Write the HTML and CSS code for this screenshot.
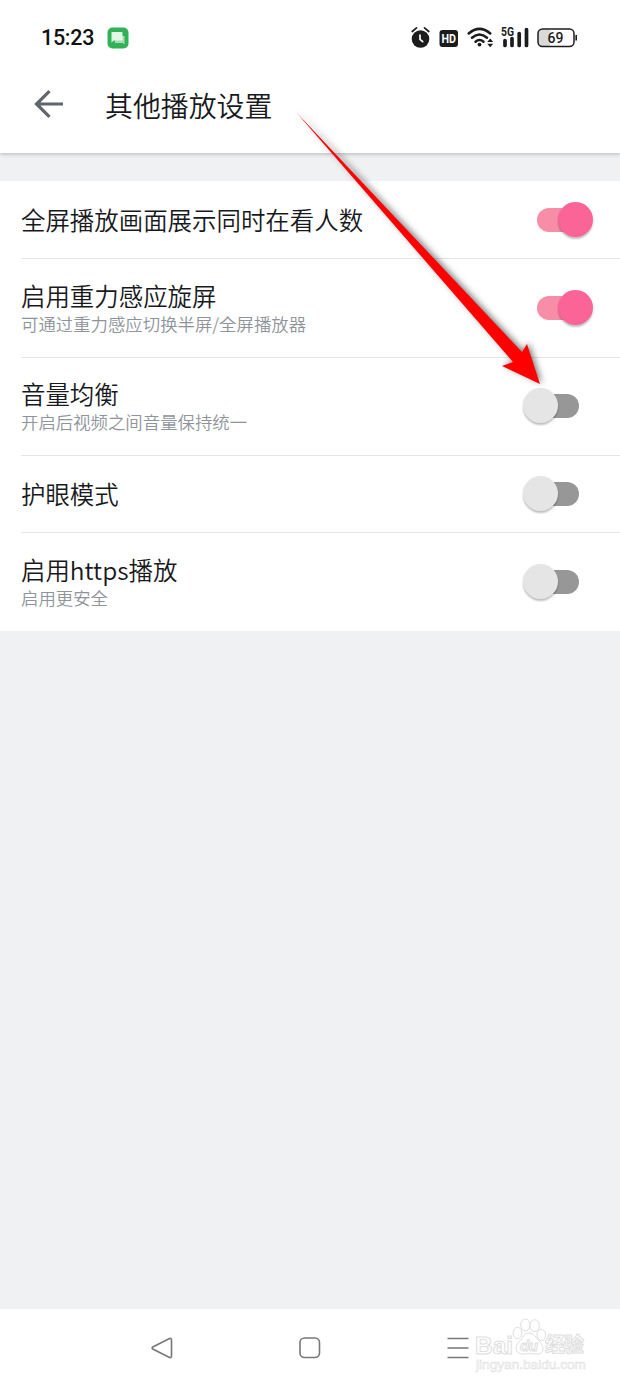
FILE: index.html
```html
<!DOCTYPE html>
<html lang="zh-CN">
	<head>
		<meta charset="UTF-8">
		<title>其他播放设置</title>
		<link rel="stylesheet" href="styles.css">
	</head>
	<body>
		<div id="phone">
			<div class="top">
				<div class="status">
					<span class="time">15:23</span>
					<svg class="msg" width="22" height="22" viewBox="0 0 22 22">
						<rect x="0.5" y="0.5" width="21" height="21" rx="5" fill="#31b257"/>
						<path d="M8 9h9.500v8.500l-2-1.500H8z" fill="#a3dfb3"/>
						<path d="M5 5h9.500q1 0 1 1v6.500q0 1-1 1H7l-2.500 2V6q0-1 .500-1z" fill="#e4f8e8"/>
					</svg>
					<div class="signs">
						<svg width="170" height="26" viewBox="0 0 170 26">
							<!-- 闹钟 -->
							<circle cx="10.500" cy="14" r="8.800" fill="#1c1c1c"/>
							<path d="M2.200 6.500l4.300-3.700M18.800 6.500l-4.300-3.700" stroke="#1c1c1c" stroke-width="1.700" stroke-linecap="round"/>
							<path d="M10 10v4.300l2.700 2.300" fill="none" stroke="#fff" stroke-width="1.700" stroke-linecap="round"/>
							<!-- HD -->
							<rect x="29.500" y="5" width="18.500" height="17" rx="3" fill="#1c1c1c"/>
							<text x="31.500" y="18" class="hd" textLength="14.500" lengthAdjust="spacingAndGlyphs">HD</text>
							<!-- wifi -->
							<g fill="none" stroke="#1c1c1c" stroke-width="2.500" stroke-linecap="round">
								<path d="M58.700 8.500Q69.500-.700 80.300 8.500"/>
								<path d="M62 12.800Q69.500 6.300 77 12.800"/>
								<path d="M65.500 16.700Q69.500 13.300 73.500 16.700"/>
							</g>
							<circle cx="69.500" cy="19.600" r="1.900" fill="#1c1c1c"/>
							<path d="M77.200 17l3-3.500 3 3.500zM77.200 18.800l3 3.500 3-3.500z" fill="#1c1c1c"/>
							<!-- 5G -->
							<text x="91" y="10.800" class="net" textLength="13" lengthAdjust="spacingAndGlyphs">5G</text>
							<path d="M95 15.500v5M102 13.500v7M109.200 8.500v12M116.500 4.500v16" stroke="#1c1c1c" stroke-width="3.700" stroke-linecap="round"/>
							<!-- 电池 -->
							<path d="M132 4.500h8v17h-8q-4 0-4-4v-9q0-4 4-4z" fill="#d9d9d9"/>
							<rect x="128" y="4" width="36" height="17.500" rx="4.500" fill="none" stroke="#1c1c1c" stroke-width="1.500"/>
							<path d="M166.200 10v5.500" stroke="#1c1c1c" stroke-width="1.600"/>
							<text x="145.500" y="17.600" class="power">69</text>
						</svg>
					</div>
				</div>
				<div class="title">
					<svg width="30" height="30" viewBox="0 0 30 30">
						<path d="M29 15H2.500M15.500 2.200L2.500 15l13 12.800" fill="none" stroke="#61666d" stroke-width="3.200"/>
					</svg>
					<h1>其他播放设置</h1>
				</div>
			</div>
			<ul class="list">
				<li>
					<div class="text"><p>全屏播放画面展示同时在看人数</p></div>
					<div class="switch on"><span></span></div>
				</li>
				<li class="two first">
					<div class="text"><p>启用重力感应旋屏</p><small>可通过重力感应切换半屏/全屏播放器</small></div>
					<div class="switch on"><span></span></div>
				</li>
				<li class="two">
					<div class="text"><p>音量均衡</p><small>开启后视频之间音量保持统一</small></div>
					<div class="switch"><span></span></div>
				</li>
				<li class="short">
					<div class="text"><p>护眼模式</p></div>
					<div class="switch"><span></span></div>
				</li>
				<li class="two">
					<div class="text"><p>启用https播放</p><small>启用更安全</small></div>
					<div class="switch"><span></span></div>
				</li>
			</ul>
			<div class="nav">
				<svg width="22" height="22" viewBox="0 0 22 22">
					<path d="M1.800 10Q.400 11 1.800 12L18.500 20.500Q20.500 21 20.500 19V3Q20.500 1 18.500 1.500Z"/>
				</svg>
				<svg width="22" height="22" viewBox="0 0 22 22">
					<rect x="1" y="1" width="19.500" height="19.500" rx="4.500"/>
				</svg>
				<svg width="22" height="22" viewBox="0 0 22 22">
					<path d="M.500 1.500h21M.500 11h21M.500 20.500h21"/>
				</svg>
			</div>
			<svg class="mark" width="116" height="62" viewBox="0 0 116 62">
				<g>
					<ellipse cx="42.500" cy="20" rx="4.300" ry="5.700"/>
					<ellipse cx="50.300" cy="12" rx="4.700" ry="6"/>
					<ellipse cx="59.700" cy="12.700" rx="4.700" ry="6"/>
					<ellipse cx="66.300" cy="22" rx="4.300" ry="5.700"/>
					<path d="M54 20c5 0 7 5 11 9s5 12-3 12c-4 0-8-1-12 0-10 1-11-7-6-12 4-4 5-9 10-9z"/>
				</g>
				<text x="0" y="40.500" class="bai" textLength="38" lengthAdjust="spacingAndGlyphs">Bai</text>
				<text x="45" y="38" class="du" textLength="18">du</text>
				<text x="70" y="39" class="exp" textLength="39">经验</text>
				<text x="1" y="56" class="site" textLength="110" lengthAdjust="spacingAndGlyphs">jingyan.baidu.com</text>
			</svg>
			<svg class="arrow" width="260" height="290" viewBox="0 0 260 290">
				<path d="M6 2L232 242L237 234L250 274L212 256L223 252Z" fill="#f00"/>
			</svg>
		</div>
	</body>
</html>
```
FILE: styles.css
```css
*{
	margin:0px;
	padding:0px;
	box-sizing:border-box;
}
body{
	background:#f0f1f3;
	font-family:"Noto Sans CJK SC",sans-serif;
}
#phone{
	width:620px;
	height:1386px;
	position:relative;
	display:flex;
	flex-direction:column;
	overflow:hidden;
}
.top{
	height:153px;
	background:#fff;
	box-shadow:0 1px 4px rgba(0,0,0,0.25);
}
.status{
	height:75px;
	display:flex;
	align-items:center;
	padding:0 40px 0 41px;
}
.time{
	font:500 21.5px/26px Roboto,sans-serif;
	letter-spacing:-0.3px;
	width:66px;
	padding-top:1px;
	color:#111;
}
.signs{
	margin-left:auto;
	height:26px;
}
.hd{
	font:bold 13px Roboto,sans-serif;
	fill:#fff;
}
.net{
	font:bold 13px Roboto,sans-serif;
	fill:#1c1c1c;
}
.power{
	font:500 14px Roboto,sans-serif;
	fill:#1c1c1c;
	text-anchor:middle;
}
.title{
	height:58px;
	display:flex;
	align-items:center;
	padding-left:34px;
}
h1{
	font-size:27.9px;
	font-weight:350;
	line-height:40px;
	margin-left:41px;
	padding-top:2px;
	color:#18191c;
}
.list{
	list-style:none;
	margin-top:28px;
	background:#fff;
}
li{
	height:78px;
	margin-left:21px;
	padding-right:27px;
	border-bottom:1px solid #e3e5e7;
	display:flex;
	align-items:center;
	justify-content:space-between;
}
.two{
	height:98px;
	padding-bottom:1px;
}
.first{height:99px;}
.short{height:77px;}
li:last-child{
	border-bottom:none;
}
.text p{
	font-size:24.45px;
	font-weight:350;
	line-height:32px;
	color:#18191c;
}
.text small{
	display:block;
	font-size:17.4px;
	font-weight:350;
	line-height:24px;
	color:#8f949b;
}
.switch{
	width:70px;
	height:36px;
	padding:6px 14px;
	position:relative;
}
.switch:before{
	content:"";
	display:block;
	height:24px;
	border-radius:12px;
	background:#979797;
}
.switch span{
	position:absolute;
	left:0;
	top:0;
	width:35px;
	height:35px;
	border-radius:50%;
	background:#e5e5e5;
	box-shadow:0 2px 2px rgba(0,0,0,0.25);
}
.on:before{
	background:#f78da7;
}
.on span{
	left:35px;
	background:#fb6497;
}
.nav{
	height:77px;
	margin-top:auto;
	background:#fff;
	display:flex;
	align-items:center;
	justify-content:center;
	gap:126px;
}
.nav svg{
	fill:none;
	stroke:#777;
	stroke-width:1.6;
}
.mark{
	position:absolute;
	left:475px;
	top:1313px;
	fill:#fff;
	stroke:#dedede;
}
.bai{
	font:bold 24px "Liberation Sans",sans-serif;
}
.du{
	font:bold italic 15px "Liberation Sans",sans-serif;
}
.exp{
	font:bold 20px "Noto Sans CJK SC",sans-serif;
}
.site{
	font:12px "Liberation Sans",sans-serif;
	stroke-width:0.5;
}
.arrow{
	position:absolute;
	left:290px;
	top:110px;
	filter:drop-shadow(2px -1px 3px rgba(0,0,0,0.5));
}
```
